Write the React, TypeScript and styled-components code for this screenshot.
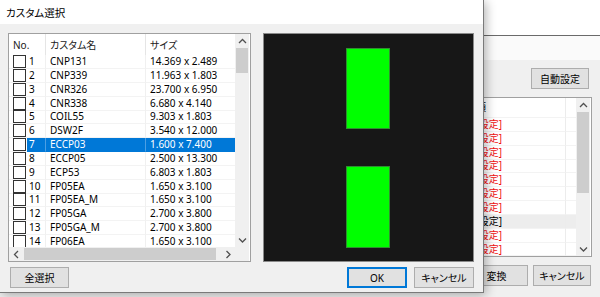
import React from "react";
import styled, { createGlobalStyle } from "styled-components";

const Global = createGlobalStyle`
  html, body { margin: 0; padding: 0; background: #f0f0f0; }
  body {
    font-family: "Noto Sans", "Noto Sans CJK JP", sans-serif;
    font-size: 10px;
    color: #000;
    font-feature-settings: "palt";
  }
  #root { width: 600px; height: 297px; overflow: hidden; }
  * { box-sizing: border-box; }
`;

const Screen = styled.div`
  width: 600px;
  height: 297px;
  display: flex;
  align-items: flex-start;
  background: #f0f0f0;
  overflow: hidden;
`;

/* ---------- Dialog ---------- */
const Dialog = styled.div`
  position: relative;
  z-index: 1;
  flex: none;
  width: 484px;
  height: 293px;
  border-right: 1px solid #7a7a7a;
  border-bottom: 1px solid #7a7a7a;
  box-shadow: 2px 2px 10px rgba(0, 0, 0, 0.3);
  background: #f0f0f0;
  display: flex;
  flex-direction: column;
`;

const TitleBar = styled.div`
  height: 24px;
  flex: none;
  background: #fff;
  display: flex;
  align-items: center;
  padding-left: 6px;
  font-size: 10.5px;
`;

const Body = styled.div`
  flex: 1;
  padding: 9px 9px 0 8px;
  display: flex;
  flex-direction: column;
`;

const TopRow = styled.div`
  display: flex;
  gap: 12px;
`;

const ListBox = styled.div`
  width: 243px;
  height: 229px;
  border: 1px solid #a0a0a0;
  background: #fff;
  display: grid;
  grid-template-columns: 226px 14px;
  grid-template-rows: 213px 14px;
`;

const ListContent = styled.div`
  overflow: hidden;
  display: flex;
  flex-direction: column;
`;

const HeaderRow = styled.div`
  flex: none;
  height: 21px;
  display: grid;
  grid-template-columns: 36px 100px 90px;
  align-items: stretch;
`;

const HeaderCell = styled.div<{ $sep?: boolean; $pad: number }>`
  display: flex;
  align-items: center;
  padding-left: ${(p) => p.$pad}px;
  border-left: ${(p) => (p.$sep ? "1px solid #e5e5e5" : "none")};
  color: #1a1a1a;
`;

const Row = styled.div`
  flex: none;
  height: 13.85px;
  display: grid;
  grid-template-columns: 18px 18px 100px 90px;
  line-height: 13px;
`;

const CheckCell = styled.div`
  display: flex;
  align-items: center;
  padding-left: 4px;
  border-bottom: 1px solid #f3f3f3;
`;

const CheckBox = styled.span`
  width: 13px;
  height: 13px;
  border: 1px solid #333;
  background: #fff;
`;

const Cell = styled.div<{ $sel?: boolean; $sep?: boolean; $pad: number }>`
  display: flex;
  align-items: center;
  padding-left: ${(p) => p.$pad}px;
  white-space: nowrap;
  overflow: hidden;
  background: ${(p) => (p.$sel ? "#0078d7" : "transparent")};
  color: ${(p) => (p.$sel ? "#fff" : "#000")};
  border-left: ${(p) => (p.$sep ? `1px solid ${p.$sel ? "#4d9fe3" : "#f0f0f0"}` : "none")};
  border-bottom: 1px solid ${(p) => (p.$sel ? "#0078d7" : "#f3f3f3")};
`;

const VScroll = styled.div`
  background: #f0f0f0;
  display: flex;
  flex-direction: column;
`;

const ScrollBtn = styled.div`
  flex: none;
  width: 14px;
  height: 14px;
  display: flex;
  align-items: center;
  justify-content: center;
`;

const VThumb = styled.div<{ $h: number }>`
  flex: none;
  height: ${(p) => p.$h}px;
  margin: 0 1px;
  background: #cdcdcd;
`;

const Spacer = styled.div`
  flex: 1;
`;

const HScroll = styled.div`
  background: #f0f0f0;
  display: flex;
  align-items: center;
`;

const HThumb = styled.div`
  width: 192px;
  height: 12px;
  margin-left: 1px;
  background: #cdcdcd;
`;

const Corner = styled.div`
  background: #f0f0f0;
`;

const Preview = styled.div`
  width: 211px;
  height: 229px;
  border: 1px solid #8a8a8a;
  background: #171717;
  display: flex;
`;

const BottomRow = styled.div`
  display: flex;
  align-items: center;
  margin-top: 5px;
  padding-left: 2px;
  gap: 7px;
`;

const Button = styled.button<{ $w: number; $default?: boolean }>`
  width: ${(p) => p.$w}px;
  height: 21px;
  padding: 0;
  background: #e1e1e1;
  border: 1px solid ${(p) => (p.$default ? "#0078d7" : "#adadad")};
  box-shadow: ${(p) => (p.$default ? "inset 0 0 0 1px #0078d7" : "none")};
  font-family: "Noto Sans", "Noto Sans CJK JP", sans-serif;
  font-feature-settings: "palt";
  font-size: 10px;
  color: #000;
  display: flex;
  align-items: center;
  justify-content: center;
`;

/* ---------- Background window ---------- */
const BackWindow = styled.div`
  flex: 1;
  height: 297px;
  overflow: hidden;
  display: flex;
  flex-direction: column;
  background: #f0f0f0;
`;

const BackTop = styled.div`
  flex: none;
  height: 36px;
  background: #fff;
  border-bottom: 1px solid #6a6a6a;
`;

const BackStrip = styled.div`
  flex: none;
  height: 24px;
  background: #fafafa;
`;

const ToolRow = styled.div`
  flex: none;
  display: flex;
  justify-content: flex-end;
  padding: 8px 11px 8px 0;
`;

const BackList = styled.div`
  flex: none;
  height: 160px;
  margin-left: -100px;
  margin-right: 8px;
  border: 1px solid #a0a0a0;
  background: #fff;
  display: flex;
`;

const BackContent = styled.div`
  flex: 1;
  overflow: hidden;
  display: flex;
  flex-direction: column;
`;

const BackHeader = styled.div`
  flex: none;
  height: 20px;
  display: flex;
`;

const BackRow = styled.div<{ $hl?: boolean }>`
  flex: none;
  height: 13.85px;
  display: flex;
  background: ${(p) => (p.$hl ? "#ededed" : "transparent")};
`;

const BackCellA = styled.div<{ $red?: boolean; $pr: number }>`
  width: 180px;
  flex: none;
  text-align: right;
  padding-right: ${(p) => p.$pr}px;
  white-space: nowrap;
  line-height: 13px;
  color: ${(p) => (p.$red ? "#f01010" : "#000")};
  border-bottom: 1px solid #f3f3f3;
  display: flex;
  align-items: center;
  justify-content: flex-end;
`;

const BackCellB = styled.div`
  flex: 1;
  border-left: 1px solid #ececec;
  border-bottom: 1px solid #f3f3f3;
`;

const BackButtons = styled.div`
  flex: none;
  display: flex;
  gap: 5px;
  margin-top: 8px;
  margin-left: -19px;
`;

const Chevron = ({ dir }: { dir: "up" | "down" | "left" | "right" }) => {
  const pts =
    dir === "up"
      ? "1,5 4.5,1.5 8,5"
      : dir === "down"
      ? "1,1.5 4.5,5 8,1.5"
      : dir === "left"
      ? "5,1 1.5,4.5 5,8"
      : "1.5,1 5,4.5 1.5,8";
  const horiz = dir === "left" || dir === "right";
  return (
    <svg width={horiz ? 7 : 9} height={horiz ? 9 : 7} viewBox={horiz ? "0 0 7 9" : "0 0 9 7"}>
      <polyline points={pts} fill="none" stroke="#505050" strokeWidth="1.3" />
    </svg>
  );
};

const rows: [string, string, string][] = [
  ["1", "CNP131", "14.369 x 2.489"],
  ["2", "CNP339", "11.963 x 1.803"],
  ["3", "CNR326", "23.700 x 6.950"],
  ["4", "CNR338", "6.680 x 4.140"],
  ["5", "COIL55", "9.303 x 1.803"],
  ["6", "DSW2F", "3.540 x 12.000"],
  ["7", "ECCP03", "1.600 x 7.400"],
  ["8", "ECCP05", "2.500 x 13.300"],
  ["9", "ECP53", "6.803 x 1.803"],
  ["10", "FP05EA", "1.650 x 3.100"],
  ["11", "FP05EA_M", "1.650 x 3.100"],
  ["12", "FP05GA", "2.700 x 3.800"],
  ["13", "FP05GA_M", "2.700 x 3.800"],
  ["14", "FP06EA", "1.650 x 3.100"],
];

const backRows = Array.from({ length: 11 }, (_, i) => i);

export default function App() {
  return (
    <>
      <Global />
      <Screen>
        <Dialog>
          <TitleBar>カスタム選択</TitleBar>
          <Body>
            <TopRow>
              <ListBox>
                <ListContent>
                  <HeaderRow>
                    <HeaderCell $pad={4}>No.</HeaderCell>
                    <HeaderCell $pad={4} $sep>
                      カスタム名
                    </HeaderCell>
                    <HeaderCell $pad={4} $sep>
                      サイズ
                    </HeaderCell>
                  </HeaderRow>
                  {rows.map(([n, name, size]) => {
                    const sel = n === "7";
                    return (
                      <Row key={n}>
                        <CheckCell>
                          <CheckBox />
                        </CheckCell>
                        <Cell $pad={2} $sel={sel}>
                          {n}
                        </Cell>
                        <Cell $pad={4} $sel={sel} $sep>
                          {name}
                        </Cell>
                        <Cell $pad={4} $sel={sel} $sep>
                          {size}
                        </Cell>
                      </Row>
                    );
                  })}
                </ListContent>
                <VScroll>
                  <ScrollBtn>
                    <Chevron dir="up" />
                  </ScrollBtn>
                  <VThumb $h={25} />
                  <Spacer />
                  <ScrollBtn>
                    <Chevron dir="down" />
                  </ScrollBtn>
                </VScroll>
                <HScroll>
                  <ScrollBtn>
                    <Chevron dir="left" />
                  </ScrollBtn>
                  <HThumb />
                  <Spacer />
                  <ScrollBtn>
                    <Chevron dir="right" />
                  </ScrollBtn>
                </HScroll>
                <Corner />
              </ListBox>
              <Preview>
                <svg width="209" height="227" viewBox="0 0 209 227">
                  <rect x="82.5" y="14.5" width="43" height="80" fill="#00ff00" stroke="#2f8f2f" strokeWidth="1" />
                  <rect x="82.5" y="132.5" width="43" height="81" fill="#00ff00" stroke="#2f8f2f" strokeWidth="1" />
                </svg>
              </Preview>
            </TopRow>
            <BottomRow>
              <Button $w={59}>全選択</Button>
              <Spacer />
              <Button $w={60} $default>
                OK
              </Button>
              <Button $w={60}>キャンセル</Button>
            </BottomRow>
          </Body>
        </Dialog>
        <BackWindow>
          <BackTop />
          <BackStrip />
          <ToolRow>
            <Button $w={58}>自動設定</Button>
          </ToolRow>
          <BackList>
            <BackContent>
              <BackHeader>
                <BackCellA $pr={79}>種類</BackCellA>
                <BackCellB />
              </BackHeader>
              {backRows.map((i) => (
                <BackRow key={i} $hl={i === 7}>
                  <BackCellA $pr={63} $red={i !== 7}>
                    [未設定]
                  </BackCellA>
                  <BackCellB />
                </BackRow>
              ))}
            </BackContent>
            <VScroll>
              <ScrollBtn>
                <Chevron dir="up" />
              </ScrollBtn>
              <VThumb $h={81} />
              <Spacer />
              <ScrollBtn>
                <Chevron dir="down" />
              </ScrollBtn>
            </VScroll>
            <Spacer style={{ flex: "none", width: 1 }} />
          </BackList>
          <BackButtons>
            <Button $w={63}>変換</Button>
            <Button $w={58}>キャンセル</Button>
          </BackButtons>
        </BackWindow>
      </Screen>
    </>
  );
}
